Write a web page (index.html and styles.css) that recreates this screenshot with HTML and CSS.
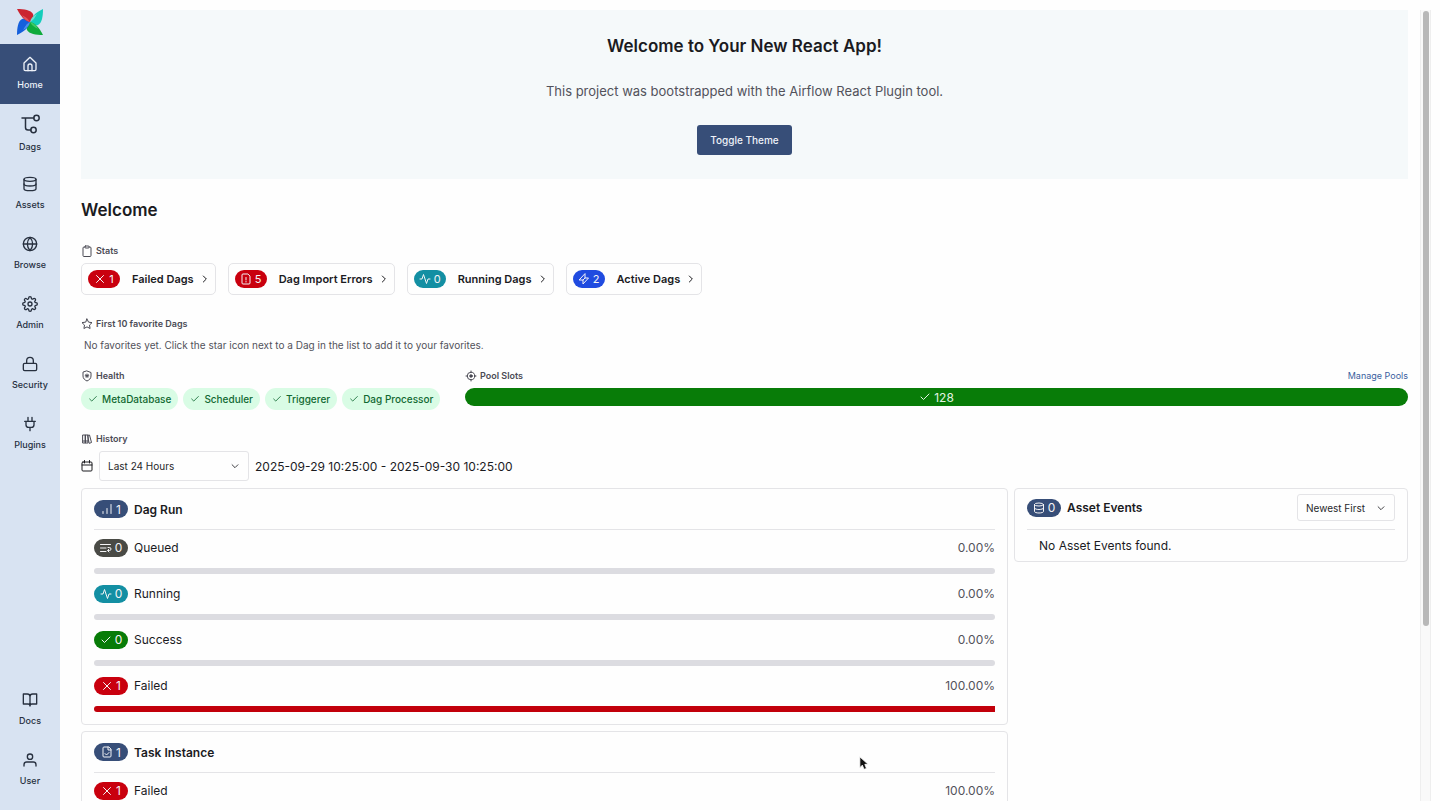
FILE: index.html
```html
<!DOCTYPE html>
<html lang="en">
<head>
    <meta charset="UTF-8">
    <meta name="viewport" content="width=device-width, initial-scale=1.0">
    <title>Airflow</title>
    <link rel="stylesheet" href="styles.css">
</head>
<body>
    <!-- Shared icons -->
    <svg class="icon-defs" aria-hidden="true">
        <symbol id="home" viewBox="0 0 24 24"><path d="M3 10.500 12 2l9 8.500V20a2 2 0 0 1-2 2H5a2 2 0 0 1-2-2z"/><path d="M9 22v-7a3 3 0 0 1 6 0v7"/></symbol>
        <symbol id="dags" viewBox="0 0 20 20"><path d="M2 4h12M5.500 4v9.500a2.500 2.500 0 0 0 2.500 2.500h3"/><circle cx="16.500" cy="4" r="2.700"/><circle cx="13.500" cy="16" r="2.700"/></symbol>
        <symbol id="database" viewBox="0 0 24 24"><ellipse cx="12" cy="5" rx="9" ry="3"/><path d="M21 12c0 1.660-4 3-9 3s-9-1.340-9-3"/><path d="M3 5v14c0 1.660 4 3 9 3s9-1.340 9-3V5"/></symbol>
        <symbol id="globe" viewBox="0 0 24 24"><circle cx="12" cy="12" r="10"/><path d="M2 12h20M12 2a15.300 15.300 0 0 1 4 10 15.300 15.300 0 0 1-4 10 15.300 15.300 0 0 1-4-10 15.300 15.300 0 0 1 4-10z"/></symbol>
        <symbol id="settings" viewBox="0 0 24 24"><circle cx="12" cy="12" r="3"/><path d="M19.400 15a1.650 1.650 0 0 0 .33 1.820l.06.06a2 2 0 1 1-2.830 2.830l-.06-.06a1.650 1.650 0 0 0-2.800 1.170V21a2 2 0 0 1-4 0v-.09A1.650 1.650 0 0 0 7.180 19.730l-.06.06a2 2 0 1 1-2.830-2.830l.06-.06A1.650 1.650 0 0 0 3.090 14H3a2 2 0 0 1 0-4h.09A1.650 1.650 0 0 0 4.270 7.180l-.06-.06a2 2 0 1 1 2.830-2.830l.06.06A1.650 1.650 0 0 0 10 3.090V3a2 2 0 0 1 4 0v.09a1.650 1.650 0 0 0 2.820 1.180l.06-.06a2 2 0 1 1 2.830 2.830l-.06.06A1.650 1.650 0 0 0 20.910 10H21a2 2 0 0 1 0 4h-.09a1.650 1.650 0 0 0-1.510 1z"/></symbol>
        <symbol id="lock" viewBox="0 0 24 24"><rect x="2" y="11" width="20" height="11" rx="2"/><path d="M7 11V7a5 5 0 0 1 10 0v4"/></symbol>
        <symbol id="plug" viewBox="0 0 24 24"><path d="M12 22v-5M9 8V2M15 8V2M18 8v5a4 4 0 0 1-4 4h-4a4 4 0 0 1-4-4V8zM4 8h16"/></symbol>
        <symbol id="book" viewBox="0 0 24 24"><path d="M2 3h6a4 4 0 0 1 4 4v14a3 3 0 0 0-3-3H2zM22 3h-6a4 4 0 0 0-4 4v14a3 3 0 0 1 3-3h7z"/></symbol>
        <symbol id="user" viewBox="0 0 24 24"><path d="M21 21v-2a4 4 0 0 0-4-4H7a4 4 0 0 0-4 4v2"/><circle cx="12" cy="7" r="4"/></symbol>
        <symbol id="clipboard" viewBox="0 0 24 24"><path d="M16 4h2a2 2 0 0 1 2 2v15a2 2 0 0 1-2 2H6a2 2 0 0 1-2-2V6a2 2 0 0 1 2-2h2"/><rect x="8" y="2" width="8" height="4" rx="1"/></symbol>
        <symbol id="star" viewBox="0 0 24 24"><path d="m12 2 3.090 6.260L22 9.270l-5 4.870 1.180 6.880L12 17.770l-6.180 3.250L7 14.140 2 9.270l6.910-1.010z"/></symbol>
        <symbol id="shield" viewBox="0 0 24 24"><path d="M12 2l8 3v7c0 5-3.500 8-8 10-4.500-2-8-5-8-10V5z"/><path d="M12 8v7M8.500 11.500h7M9.500 9.500l5 4M14.500 9.500l-5 4"/></symbol>
        <symbol id="target" viewBox="0 0 24 24"><circle cx="12" cy="12" r="7.500"/><circle cx="12" cy="12" r="2.500" fill="currentColor"/><path d="M12 2v3M12 19v3M2 12h3M19 12h3"/></symbol>
        <symbol id="books" viewBox="0 0 24 24"><path d="M4 4h5v16H4zM9 4h5v16H9zM4 16h10M14 4.500l3-.5 4 15-4 1.500z"/></symbol>
        <symbol id="calendar" viewBox="0 0 24 24"><rect x="2" y="4" width="20" height="18" rx="2"/><path d="M7 1v5M17 1v5M2 10h20"/></symbol>
        <symbol id="x" viewBox="0 0 24 24"><path d="M5 5l14 14M19 5 5 19"/></symbol>
        <symbol id="check" viewBox="0 0 24 24"><path d="M20 6 9 17l-5-5"/></symbol>
        <symbol id="file-error" viewBox="0 0 24 24"><path d="M15 2H6a2 2 0 0 0-2 2v16a2 2 0 0 0 2 2h12a2 2 0 0 0 2-2V7zM12 9v5M12 17v1"/></symbol>
        <symbol id="file-check" viewBox="0 0 24 24"><path d="M15 2H6a2 2 0 0 0-2 2v16a2 2 0 0 0 2 2h12a2 2 0 0 0 2-2V7zM14 2v6h6M8 15l3 3 5-5"/></symbol>
        <symbol id="activity" viewBox="0 0 24 24"><path d="M22 12h-4l-3 9L9 3l-3 9H2"/></symbol>
        <symbol id="zap" viewBox="0 0 24 24"><path d="M14 2v8h7L10 22v-8H3zM10 14l4-4"/></symbol>
        <symbol id="bars" viewBox="0 0 24 24"><path d="M4 21v-4M12 21V11M20 21V3"/></symbol>
        <symbol id="queue" viewBox="0 0 24 24"><path d="M1 5h20M1 12h11M1 19h11"/><path d="M16 11h3a3 3 0 0 1 0 6h-3M18 14l-3 3 3 3"/></symbol>
        <symbol id="right" viewBox="0 0 24 24"><path d="m7 3 9 9-9 9"/></symbol>
        <symbol id="down" viewBox="0 0 24 24"><path d="m5 9 7 7 7-7"/></symbol>
    </svg>

    <nav class="sidebar">
        <a class="logo" href="#" aria-label="Airflow">
            <svg viewBox="0 0 28 28">
                <path fill="#14cdbb" transform="rotate(90 14 14)" d="M1 1c7 0 14 1 16 5 1 3-1 6-3 8C9 13 5 9 1 1z"/>
                <path fill="#0fab3c" transform="rotate(180 14 14)" d="M1 1c7 0 14 1 16 5 1 3-1 6-3 8C9 13 5 9 1 1z"/>
                <path fill="#1560dc" transform="rotate(270 14 14)" d="M1 1c7 0 14 1 16 5 1 3-1 6-3 8C9 13 5 9 1 1z"/>
                <path fill="#cb2430" d="M1 1c7 0 14 1 16 5 1 3-1 6-3 8C9 13 5 9 1 1z"/>
                <path fill="#6fded4" transform="rotate(90 14 14)" d="M6 7c3 2 6 3 8 7C10 13 8 11 6 7z"/>
                <path fill="#3fc965" transform="rotate(180 14 14)" d="M6 7c3 2 6 3 8 7C10 13 8 11 6 7z"/>
                <path fill="#4c90ee" transform="rotate(270 14 14)" d="M6 7c3 2 6 3 8 7C10 13 8 11 6 7z"/>
                <path fill="#e0525c" d="M6 7c3 2 6 3 8 7C10 13 8 11 6 7z"/>
            </svg>
        </a>
        <a class="nav-item active" href="#"><svg class="icon"><use href="#home"/></svg>Home</a>
        <a class="nav-item" href="#"><svg class="icon icon-large"><use href="#dags"/></svg>Dags</a>
        <a class="nav-item" href="#"><svg class="icon"><use href="#database"/></svg>Assets</a>
        <a class="nav-item" href="#"><svg class="icon"><use href="#globe"/></svg>Browse</a>
        <a class="nav-item" href="#"><svg class="icon"><use href="#settings"/></svg>Admin</a>
        <a class="nav-item" href="#"><svg class="icon"><use href="#lock"/></svg>Security</a>
        <a class="nav-item" href="#"><svg class="icon"><use href="#plug"/></svg>Plugins</a>
        <div class="nav-bottom">
            <a class="nav-item" href="#"><svg class="icon"><use href="#book"/></svg>Docs</a>
            <a class="nav-item" href="#"><svg class="icon"><use href="#user"/></svg>User</a>
        </div>
    </nav>

    <div class="page">
        <main class="content">
            <section class="banner">
                <h2>Welcome to Your New React App!</h2>
                <p>This project was bootstrapped with the Airflow React Plugin tool.</p>
                <button type="button">Toggle Theme</button>
            </section>

            <h1>Welcome</h1>

            <section class="block">
                <h3 class="label"><svg class="icon"><use href="#clipboard"/></svg>Stats</h3>
                <div class="stats">
                    <a class="stat" href="#"><span class="badge failed"><svg class="icon"><use href="#x"/></svg>1</span>Failed Dags<svg class="icon arrow"><use href="#right"/></svg></a>
                    <a class="stat" href="#"><span class="badge failed"><svg class="icon"><use href="#file-error"/></svg>5</span>Dag Import Errors<svg class="icon arrow"><use href="#right"/></svg></a>
                    <a class="stat" href="#"><span class="badge running"><svg class="icon"><use href="#activity"/></svg>0</span>Running Dags<svg class="icon arrow"><use href="#right"/></svg></a>
                    <a class="stat" href="#"><span class="badge active-dags"><svg class="icon"><use href="#zap"/></svg>2</span>Active Dags<svg class="icon arrow"><use href="#right"/></svg></a>
                </div>
            </section>

            <section class="block">
                <h3 class="label"><svg class="icon"><use href="#star"/></svg>First 10 favorite Dags</h3>
                <p class="favorites">No favorites yet. Click the star icon next to a Dag in the list to add it to your favorites.</p>
            </section>

            <div class="status-row">
                <section>
                    <h3 class="label"><svg class="icon"><use href="#shield"/></svg>Health</h3>
                    <div class="health">
                        <span class="health-badge"><svg class="icon"><use href="#check"/></svg>MetaDatabase</span>
                        <span class="health-badge"><svg class="icon"><use href="#check"/></svg>Scheduler</span>
                        <span class="health-badge"><svg class="icon"><use href="#check"/></svg>Triggerer</span>
                        <span class="health-badge"><svg class="icon"><use href="#check"/></svg>Dag Processor</span>
                    </div>
                </section>
                <section>
                    <div class="pools-head">
                        <h3 class="label"><svg class="icon"><use href="#target"/></svg>Pool Slots</h3>
                        <a href="#">Manage Pools</a>
                    </div>
                    <div class="pool-bar"><svg class="icon"><use href="#check"/></svg>128</div>
                </section>
            </div>

            <section class="block">
                <h3 class="label"><svg class="icon"><use href="#books"/></svg>History</h3>
                <div class="range">
                    <svg class="icon"><use href="#calendar"/></svg>
                    <div class="select range-select">
                        <select aria-label="Time range"><option>Last 24 Hours</option></select>
                        <svg class="icon"><use href="#down"/></svg>
                    </div>
                    <span>2025-09-29 10:25:00 - 2025-09-30 10:25:00</span>
                </div>
            </section>

            <div class="history">
                <div class="runs">
                    <section class="panel">
                        <div class="panel-head"><span class="badge total"><svg class="icon"><use href="#bars"/></svg>1</span><h4>Dag Run</h4></div>
                        <div class="state">
                            <div class="state-text"><span class="badge queued"><svg class="icon"><use href="#queue"/></svg>0</span>Queued<span class="percent">0.00%</span></div>
                            <div class="bar"></div>
                        </div>
                        <div class="state">
                            <div class="state-text"><span class="badge running"><svg class="icon"><use href="#activity"/></svg>0</span>Running<span class="percent">0.00%</span></div>
                            <div class="bar"></div>
                        </div>
                        <div class="state">
                            <div class="state-text"><span class="badge success"><svg class="icon"><use href="#check"/></svg>0</span>Success<span class="percent">0.00%</span></div>
                            <div class="bar"></div>
                        </div>
                        <div class="state">
                            <div class="state-text"><span class="badge failed"><svg class="icon"><use href="#x"/></svg>1</span>Failed<span class="percent">100.00%</span></div>
                            <div class="bar bar-failed"></div>
                        </div>
                    </section>
                    <section class="panel">
                        <div class="panel-head"><span class="badge total"><svg class="icon"><use href="#file-check"/></svg>1</span><h4>Task Instance</h4></div>
                        <div class="state">
                            <div class="state-text"><span class="badge failed"><svg class="icon"><use href="#x"/></svg>1</span>Failed<span class="percent">100.00%</span></div>
                            <div class="bar bar-failed"></div>
                        </div>
                    </section>
                </div>
                <section class="panel events">
                    <div class="panel-head">
                        <span class="badge total"><svg class="icon"><use href="#database"/></svg>0</span><h4>Asset Events</h4>
                        <div class="select sort-select">
                            <select aria-label="Sort order"><option>Newest First</option></select>
                            <svg class="icon"><use href="#down"/></svg>
                        </div>
                    </div>
                    <p>No Asset Events found.</p>
                </section>
            </div>
        </main>
        <div class="scrollbar"><div class="thumb"></div></div>
    </div>

    <svg class="cursor" viewBox="0 0 12 18" aria-hidden="true"><path d="M1 1v13l3-3 2 5 3-1-2-5h4z"/></svg>
</body>
</html>
```

FILE: styles.css
```css
* {
    box-sizing: border-box;
}
body {
    margin: 0;
    height: 100vh;
    display: flex;
    overflow: hidden;
    background-color: #fefefe;
    color: #1b1b1f;
    font-family: Inter, "Liberation Sans", sans-serif;
    font-size: 12px;
}
h1, h2, h3, h4, p {
    margin: 0;
}
a {
    color: inherit;
    text-decoration: none;
}
.icon-defs {
    position: absolute;
    width: 0;
    height: 0;
}
.icon {
    width: 12px;
    height: 12px;
    flex-shrink: 0;
    fill: none;
    stroke: currentColor;
    stroke-width: 2;
    stroke-linecap: round;
    stroke-linejoin: round;
}

/* Sidebar */
.sidebar {
    width: 60px;
    flex-shrink: 0;
    display: flex;
    flex-direction: column;
    padding-bottom: 10px;
    background-color: #d8e3f2;
    color: #27303f;
}
.logo {
    height: 44px;
    display: flex;
    align-items: center;
    justify-content: center;
}
.logo svg {
    width: 28px;
    height: 28px;
}
.nav-item {
    height: 60px;
    display: flex;
    flex-direction: column;
    align-items: center;
    justify-content: center;
    gap: 6px;
    padding-bottom: 1px;
    font-size: 9px;
    font-weight: 500;
    line-height: 13px;
}
.nav-item .icon {
    width: 16px;
    height: 16px;
}
.nav-item .icon-large {
    width: 20px;
    height: 20px;
    stroke-width: 1.5;
}
.nav-item.active {
    background-color: #374e78;
    color: #eef2f8;
}
.nav-bottom {
    margin-top: auto;
}

/* Page */
.page {
    flex: 1;
    min-width: 0;
    display: flex;
    margin: 10px 9px 9px 0;
    overflow: hidden;
}
.content {
    flex: 1;
    min-width: 0;
    padding: 0 12px 0 21px;
}
.scrollbar {
    width: 11px;
    padding: 1px 2px;
    background-color: #f9f9f9;
    border: solid #eeeeee;
    border-width: 0 1px;
}
.thumb {
    width: 6px;
    height: 78%;
    border-radius: 3px;
    background-color: #b8b8b8;
}
.banner {
    display: flex;
    flex-direction: column;
    align-items: center;
    gap: 24px;
    padding: 24px;
    background-color: #f5f9fa;
}
.banner h2 {
    font-size: 17px;
    font-weight: 600;
    line-height: 24px;
}
.banner p {
    font-size: 13px;
    line-height: 19px;
    color: #52525b;
}
.banner button {
    height: 30px;
    padding: 0 13px;
    border: none;
    border-radius: 3px;
    background-color: #374e78;
    color: #eef2f8;
    font: 500 10px Inter, "Liberation Sans", sans-serif;
}
h1 {
    margin-top: 19px;
    font-size: 17px;
    font-weight: 600;
    line-height: 24px;
}
.block {
    margin-top: 22px;
}
.label {
    display: flex;
    align-items: center;
    gap: 3px;
    font-size: 9px;
    font-weight: 600;
    line-height: 14px;
    color: #4b4b55;
}

/* Stats */
.stats {
    display: flex;
    gap: 12px;
    margin-top: 5px;
}
.stat {
    height: 32px;
    display: flex;
    align-items: center;
    padding: 0 6px;
    border: 1px solid #e4e4e7;
    border-radius: 5px;
    font-size: 11px;
    font-weight: 600;
}
.stat .badge {
    width: 32px;
    margin-right: 12px;
    font-size: 11px;
}
.arrow {
    width: 8px;
    height: 8px;
    margin-left: 7px;
    stroke-width: 3;
}
.badge {
    width: 34px;
    height: 18px;
    display: flex;
    align-items: center;
    justify-content: center;
    gap: 3px;
    border-radius: 9px;
    color: #f4f4f6;
    font-size: 12px;
    font-weight: 400;
}
.failed {
    background-color: #c9000e;
}
.running {
    background-color: #138fa3;
}
.active-dags {
    background-color: #204be0;
}
.queued {
    background-color: #494a45;
}
.success {
    background-color: #087c08;
}
.total {
    background-color: #374e78;
}
.favorites {
    margin-top: 6px;
    padding-left: 3px;
    font-size: 10px;
    line-height: 16px;
    color: #52525b;
}

/* Health and pools */
.status-row {
    display: grid;
    grid-template-columns: 360px 1fr;
    gap: 24px;
    margin-top: 16px;
}
.health {
    display: flex;
    gap: 5px;
    margin-top: 5px;
}
.health-badge {
    height: 22px;
    display: flex;
    align-items: center;
    gap: 4px;
    padding: 0 7px;
    border-radius: 11px;
    background-color: #d9fce5;
    color: #116932;
    font-size: 10px;
    font-weight: 500;
}
.health-badge .icon {
    width: 10px;
    height: 10px;
}
.pools-head {
    display: flex;
    justify-content: space-between;
}
.pools-head a {
    font-size: 9px;
    line-height: 14px;
    color: #3b5f9e;
}
.pool-bar {
    height: 18px;
    display: flex;
    align-items: center;
    justify-content: center;
    gap: 3px;
    margin-top: 5px;
    border-radius: 9px;
    background-color: #087c08;
    color: #e4f3e4;
}

/* History */
.range {
    height: 30px;
    display: flex;
    align-items: center;
    gap: 6px;
    margin-top: 5px;
}
.select {
    position: relative;
}
.select select {
    width: 100%;
    height: 100%;
    padding: 0 8px;
    appearance: none;
    border: 1px solid #e4e4e7;
    border-radius: 3px;
    background-color: #fefefe;
    color: #27272a;
    font: 10px Inter, "Liberation Sans", sans-serif;
}
.select .icon {
    position: absolute;
    top: calc(50% - 5px);
    right: 9px;
    width: 10px;
    height: 10px;
    pointer-events: none;
}
.range-select {
    width: 150px;
    height: 30px;
}
.sort-select {
    width: 98px;
    height: 27px;
    margin-left: auto;
}
.history {
    display: grid;
    grid-template-columns: 40fr 17fr;
    align-items: start;
    gap: 6px;
    margin-top: 7px;
}
.runs {
    display: grid;
    gap: 6px;
}
.panel {
    padding: 11px 12px 12px;
    border: 1px solid #e4e4e7;
    border-radius: 4px;
}
.panel-head {
    display: flex;
    align-items: center;
    gap: 6px;
    margin-bottom: 9px;
    padding-bottom: 11px;
    border-bottom: 1px solid #e4e4e7;
}
.panel h4 {
    font-size: 12px;
    font-weight: 600;
    line-height: 16px;
}
.runs h4 {
    padding-top: 2px;
}
.state + .state {
    margin-top: 11px;
}
.state-text {
    display: flex;
    align-items: center;
    gap: 6px;
    line-height: 18px;
}
.percent {
    margin-left: auto;
    color: #52525b;
}
.bar {
    height: 6px;
    margin-top: 11px;
    border-radius: 3px;
    background-color: #dcdce1;
}
.bar-failed {
    border-radius: 3px 0 0 3px;
    background-color: #c2000b;
}
.events {
    padding: 5px 12px 7px;
}
.events .panel-head {
    margin-bottom: 8px;
    padding-bottom: 8px;
}
.events p {
    padding-left: 12px;
    line-height: 16px;
}

/* Pointer */
.cursor {
    position: absolute;
    left: 859px;
    top: 756px;
    width: 10px;
    height: 15px;
    fill: #111111;
    stroke: #ffffff;
}
```
